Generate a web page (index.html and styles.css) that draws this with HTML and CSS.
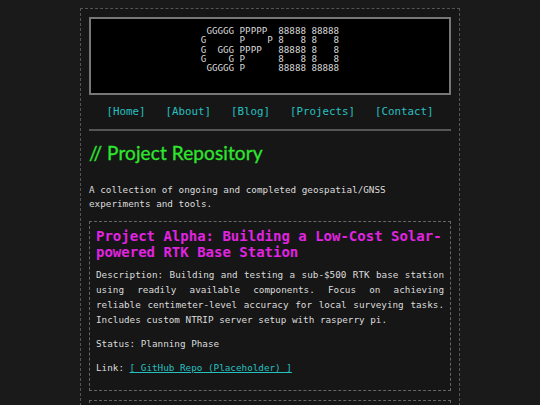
FILE: index.html
```
<!DOCTYPE html>
<html lang="en">
<head>
<meta charset="utf-8">
<title>Project Repository</title>
<link rel="stylesheet" href="styles.css">
</head>
<body>
<div class="container">
  <header class="banner">
<pre class="ascii"> GGGGG PPPPP  88888 88888
G      P    P 8   8 8   8
G  GGG PPPP   88888 8   8
G    G P      8   8 8   8
 GGGGG P      88888 88888</pre>
  </header>
  <nav class="nav">
    <a href="#">[Home]</a>
    <a href="#">[About]</a>
    <a href="#">[Blog]</a>
    <a href="#">[Projects]</a>
    <a href="#">[Contact]</a>
  </nav>
  <h1 class="title">// Project Repository</h1>
  <p class="intro">A collection of ongoing and completed geospatial/GNSS experiments and tools.</p>
  <section class="card">
    <h3 class="card-title">Project Alpha: Building a Low-Cost Solar-powered RTK Base Station</h3>
    <p class="desc">Description: Building and testing a sub-$500 RTK base station using readily available components. Focus on achieving reliable centimeter-level accuracy for local surveying tasks. Includes custom NTRIP server setup with rasperry pi.</p>
    <p>Status: Planning Phase</p>
    <p>Link: <a class="link" href="#">[ GitHub Repo (Placeholder) ]</a></p>
  </section>
  <section class="card card-next"></section>
</div>
</body>
</html>
```
FILE: styles.css
```
html, body {
  background: #1a1a1a;
}
body {
  margin: 8px;
  font-family: "DejaVu Sans Mono", monospace;
  font-size: 9.3px;
  line-height: 1.6;
  color: #dcdcdc;
}
.container {
  width: 380px;
  box-sizing: border-box;
  margin: 0 auto;
  border: 1px dashed #555;
  background: #161616;
  padding: 8px 8px 8px 8px;
}
.banner {
  background: #000;
  border: 2px solid #777;
  padding: 7px 10px 17px;
  text-align: center;
}
.ascii {
  display: inline-block;
  text-align: left;
  margin: 0;
  font-family: "DejaVu Sans Mono", monospace;
  font-size: 9.2px;
  line-height: 9.3px;
  color: #d8d8d8;
}
.nav {
  display: flex;
  justify-content: center;
  gap: 20px;
  padding: 11px 0 10px;
  border-bottom: 2px solid #555;
  font-size: 10.8px;
  line-height: 12.5px;
}
.nav a {
  color: #26c0c0;
  text-decoration: none;
}
.title {
  font-family: Lato, "Noto Sans", sans-serif;
  font-weight: 400;
  font-size: 19px;
  line-height: 21px;
  letter-spacing: 0.1px;
  color: #2ee62e;
  -webkit-text-stroke: 0.3px #2ee62e;
  margin: 11px 0 20px;
}
.intro {
  margin: 0 0 9px;
}
.card {
  border: 1px dashed #666;
  padding: 6px 6px 5px;
  margin-bottom: 9px;
}
.card-next {
  min-height: 40px;
}
.card-title {
  font-size: 14px;
  line-height: 16px;
  font-weight: bold;
  color: #e024e0;
  margin: 0 0 8px;
}
.card p {
  margin: 0 0 9.3px;
}
.desc {
  text-align: justify;
}
.link {
  color: #26c0c0;
  text-decoration: underline;
}
```
